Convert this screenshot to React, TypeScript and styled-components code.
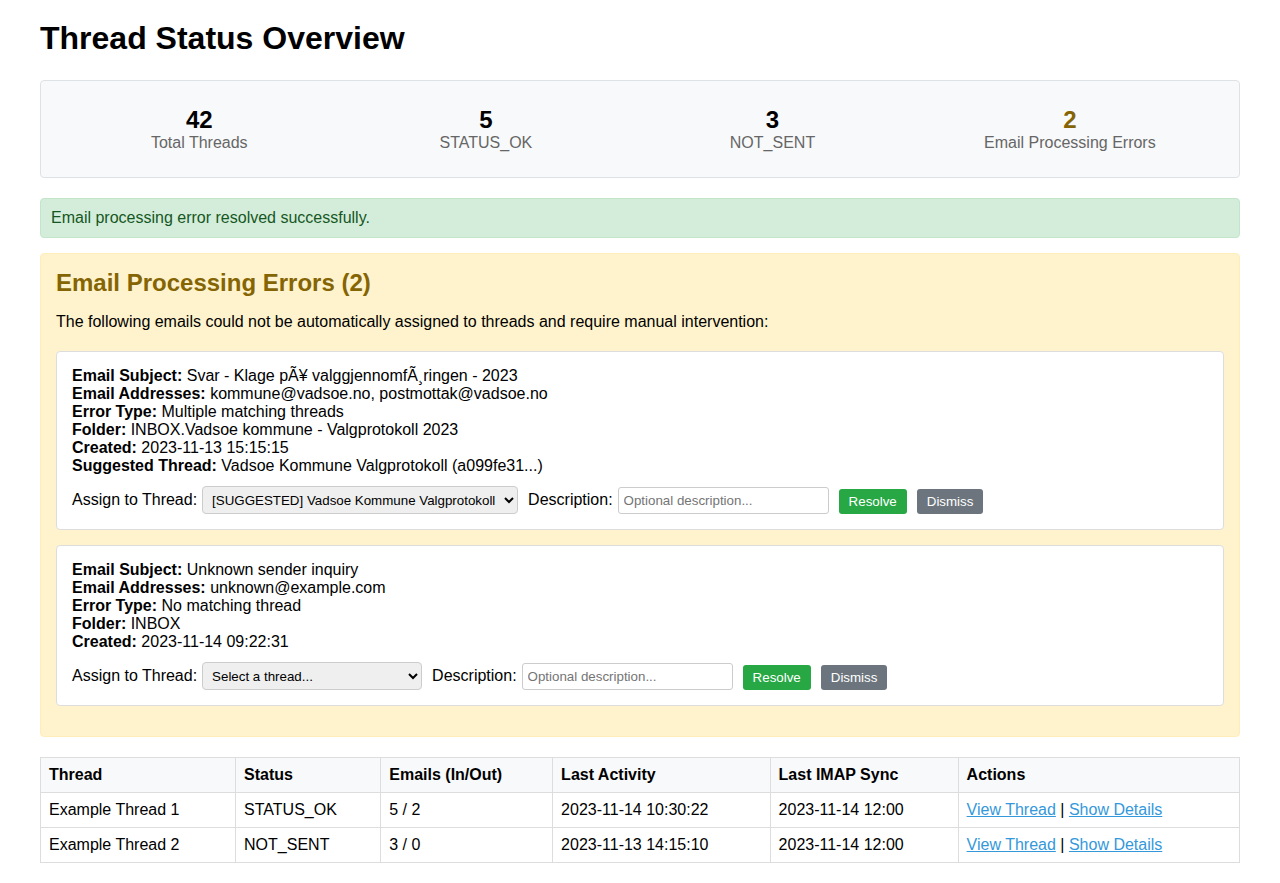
import React from "react";
import styled, { createGlobalStyle } from "styled-components";

const GlobalStyle = createGlobalStyle`
  html, body { margin: 0; padding: 0; background: #fff; }
  body {
    font-family: "Liberation Sans", Arial, sans-serif;
    font-size: 16px;
    color: #000;
  }
`;

const Page = styled.div`
  padding: 20px 40px 20px;
`;

const Title = styled.h1`
  font-size: 32px;
  font-weight: bold;
  margin: 0 0 23px;
`;

const StatsBox = styled.div`
  display: flex;
  justify-content: space-around;
  background: #f8f9fa;
  border: 1px solid #dee2e6;
  border-radius: 4px;
  padding: 15px;
  margin-bottom: 20px;
`;

const Stat = styled.div`
  min-width: 150px;
  text-align: center;
  padding: 10px 0;
`;

const StatNumber = styled.div<{ $warn?: boolean }>`
  font-size: 24px;
  font-weight: bold;
  color: ${(p) => (p.$warn ? "#856404" : "#000")};
`;

const StatLabel = styled.div`
  font-size: 16px;
  color: #666;
`;

const Alert = styled.div`
  background: #d4edda;
  border: 1px solid #c3e6cb;
  color: #155724;
  border-radius: 4px;
  padding: 10px;
  margin-bottom: 15px;
`;

const ErrorSection = styled.section`
  background: #fff3cd;
  border: 1px solid #ffeeba;
  border-radius: 4px;
  padding: 15px;
  margin-bottom: 20px;
`;

const SectionTitle = styled.h2`
  color: #856404;
  font-size: 24px;
  font-weight: bold;
  margin: 0 0 16px;
`;

const Intro = styled.p`
  margin: 0 0 20px;
`;

const ErrorCard = styled.div`
  background: #fff;
  border: 1px solid #ddd;
  border-radius: 4px;
  padding: 15px;
  margin-bottom: 15px;
`;

const InfoLine = styled.div`
  line-height: 18px;
`;

const ActionRow = styled.div`
  display: flex;
  align-items: center;
  margin-top: 11px;
  height: 28px;
`;

const FieldLabel = styled.label<{ $lead?: number }>`
  margin-left: ${(p) => p.$lead ?? 0}px;
  margin-right: 5px;
`;

const ThreadSelect = styled.select<{ $w: number }>`
  width: ${(p) => p.$w}px;
  height: 28px;
  box-sizing: border-box;
  padding: 4px 5px;
  font-family: "Liberation Sans", Arial, sans-serif;
  font-size: 13.333px;
  color: #000;
  background-color: #efefef;
  border: 1px solid #ccc;
  border-radius: 4px;
`;

const DescInput = styled.input`
  width: 211px;
  height: 27px;
  box-sizing: border-box;
  padding: 5px;
  font-family: "Liberation Sans", Arial, sans-serif;
  font-size: 13.333px;
  border: 1px solid #ccc;
  border-radius: 3px;
  background: #fff;
  &::placeholder { color: #757575; }
`;

const ActionButton = styled.button<{ $kind: "ok" | "muted" }>`
  margin-left: ${(p) => (p.$kind === "ok" ? 10 : 10)}px;
  margin-top: 2px;
  height: 25px;
  padding: 0 10px;
  border: none;
  border-radius: 3px;
  color: #fff;
  font-family: "Liberation Sans", Arial, sans-serif;
  font-size: 13.333px;
  background: ${(p) => (p.$kind === "ok" ? "#28a745" : "#6c757d")};
  cursor: pointer;
`;

const Table = styled.table`
  width: 100%;
  border-collapse: collapse;
`;

const Th = styled.th`
  text-align: left;
  font-weight: bold;
  background: #f8f9fa;
  border: 1px solid #ddd;
  padding: 8px;
`;

const Td = styled.td`
  border: 1px solid #ddd;
  padding: 8px;
`;

const Link = styled.a`
  color: #3498db;
  text-decoration: underline;
  cursor: pointer;
`;

type ErrorItem = {
  subject: string;
  addresses: string;
  type: string;
  folder: string;
  created: string;
  suggested?: string;
  option: string;
  selectWidth: number;
};

const errors: ErrorItem[] = [
  {
    subject: "Svar - Klage pÃ¥ valggjennomfÃ¸ringen - 2023",
    addresses: "kommune@vadsoe.no, postmottak@vadsoe.no",
    type: "Multiple matching threads",
    folder: "INBOX.Vadsoe kommune - Valgprotokoll 2023",
    created: "2023-11-13 15:15:15",
    suggested: "Vadsoe Kommune Valgprotokoll (a099fe31...)",
    option: "[SUGGESTED] Vadsoe Kommune Valgprotokoll",
    selectWidth: 316,
  },
  {
    subject: "Unknown sender inquiry",
    addresses: "unknown@example.com",
    type: "No matching thread",
    folder: "INBOX",
    created: "2023-11-14 09:22:31",
    option: "Select a thread...",
    selectWidth: 220,
  },
];

const rows = [
  ["Example Thread 1", "STATUS_OK", "5 / 2", "2023-11-14 10:30:22", "2023-11-14 12:00"],
  ["Example Thread 2", "NOT_SENT", "3 / 0", "2023-11-13 14:15:10", "2023-11-14 12:00"],
];

export default function App() {
  return (
    <Page>
      <GlobalStyle />
      <Title>Thread Status Overview</Title>

      <StatsBox>
        <Stat>
          <StatNumber>42</StatNumber>
          <StatLabel>Total Threads</StatLabel>
        </Stat>
        <Stat>
          <StatNumber>5</StatNumber>
          <StatLabel>STATUS_OK</StatLabel>
        </Stat>
        <Stat>
          <StatNumber>3</StatNumber>
          <StatLabel>NOT_SENT</StatLabel>
        </Stat>
        <Stat>
          <StatNumber $warn>2</StatNumber>
          <StatLabel>Email Processing Errors</StatLabel>
        </Stat>
      </StatsBox>

      <Alert>Email processing error resolved successfully.</Alert>

      <ErrorSection>
        <SectionTitle>Email Processing Errors (2)</SectionTitle>
        <Intro>
          The following emails could not be automatically assigned to threads and require manual
          intervention:
        </Intro>
        {errors.map((e, i) => (
          <ErrorCard key={i}>
            <InfoLine>
              <strong>Email Subject:</strong> {e.subject}
            </InfoLine>
            <InfoLine>
              <strong>Email Addresses:</strong> {e.addresses}
            </InfoLine>
            <InfoLine>
              <strong>Error Type:</strong> {e.type}
            </InfoLine>
            <InfoLine>
              <strong>Folder:</strong> {e.folder}
            </InfoLine>
            <InfoLine>
              <strong>Created:</strong> {e.created}
            </InfoLine>
            {e.suggested && (
              <InfoLine>
                <strong>Suggested Thread:</strong> {e.suggested}
              </InfoLine>
            )}
            <ActionRow>
              <FieldLabel>Assign to Thread:</FieldLabel>
              <ThreadSelect $w={e.selectWidth} defaultValue="a">
                <option value="a">{e.option}</option>
              </ThreadSelect>
              <FieldLabel $lead={10}>Description:</FieldLabel>
              <DescInput placeholder="Optional description..." />
              <ActionButton $kind="ok">Resolve</ActionButton>
              <ActionButton $kind="muted">Dismiss</ActionButton>
            </ActionRow>
          </ErrorCard>
        ))}
      </ErrorSection>

      <Table>
        <thead>
          <tr>
            <Th>Thread</Th>
            <Th>Status</Th>
            <Th>Emails (In/Out)</Th>
            <Th>Last Activity</Th>
            <Th>Last IMAP Sync</Th>
            <Th>Actions</Th>
          </tr>
        </thead>
        <tbody>
          {rows.map((r, i) => (
            <tr key={i}>
              {r.map((c, j) => (
                <Td key={j}>{c}</Td>
              ))}
              <Td>
                <Link>View Thread</Link> | <Link>Show Details</Link>
              </Td>
            </tr>
          ))}
        </tbody>
      </Table>
    </Page>
  );
}
